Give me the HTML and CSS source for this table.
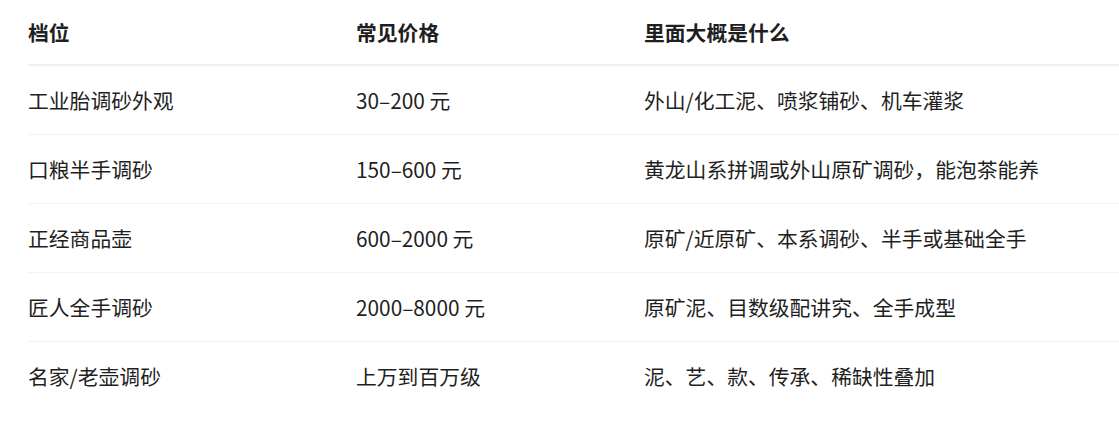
FILE: index.html
```html
<!DOCTYPE html>
<html lang="zh-CN">
<head>
<meta charset="utf-8">
<title>档位</title>
<link rel="stylesheet" href="styles.css">
</head>
<body>
<div class="wrap">
<table class="grid">
<colgroup><col class="c1"><col class="c2"><col class="c3"></colgroup>
<thead>
<tr><th>档位</th><th>常见价格</th><th>里面大概是什么</th></tr>
</thead>
<tbody>
<tr><td>工业胎调砂外观</td><td>30–200 元</td><td>外山/化工泥、喷浆铺砂、机车灌浆</td></tr>
<tr><td>口粮半手调砂</td><td>150–600 元</td><td>黄龙山系拼调或外山原矿调砂，能泡茶能养</td></tr>
<tr><td>正经商品壶</td><td>600–2000 元</td><td>原矿/近原矿、本系调砂、半手或基础全手</td></tr>
<tr><td>匠人全手调砂</td><td>2000–8000 元</td><td>原矿泥、目数级配讲究、全手成型</td></tr>
<tr><td>名家/老壶调砂</td><td>上万到百万级</td><td>泥、艺、款、传承、稀缺性叠加</td></tr>
</tbody>
</table>
</div>
</body>
</html>
```
FILE: styles.css
```css
html, body { margin: 0; padding: 0; background: #ffffff; }
body {
  font-family: "Noto Sans CJK SC", "Noto Sans", sans-serif;
  color: #1f1f1f;
  font-size: 20.8px;
}
.wrap { padding-left: 28px; }
.grid {
  border-collapse: collapse;
  table-layout: fixed;
  width: 100%;
}
.c1 { width: 328px; }
.c2 { width: 288px; }
.grid th {
  text-align: left;
  font-weight: 700;
  line-height: 28px;
  padding: 18px 0;
  border-bottom: 2px solid #efefef;
}
.grid td {
  line-height: 28px;
  padding: 20px 0;
  border-bottom: 1px solid #f2f2f2;
  white-space: nowrap;
}
.grid tbody tr:last-child td { border-bottom: none; }
```
